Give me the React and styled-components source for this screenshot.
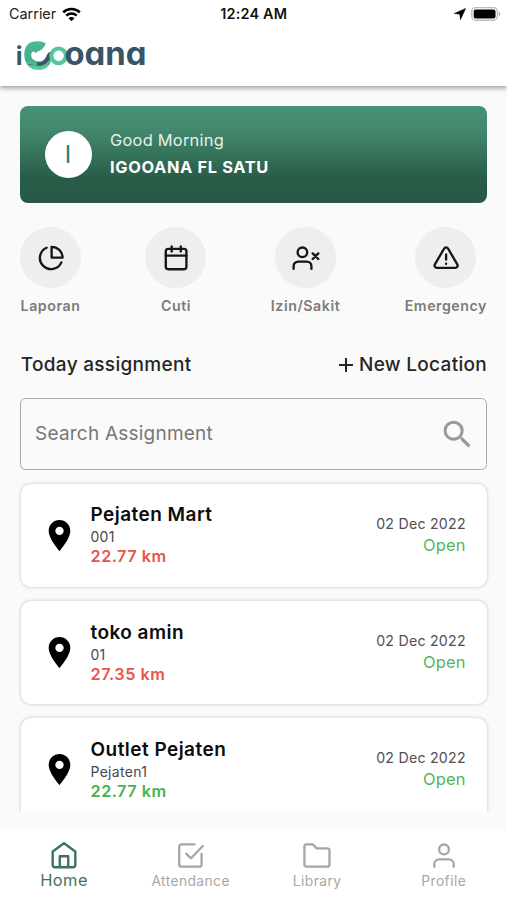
import React from "react";
import styled, { createGlobalStyle } from "styled-components";

const GlobalStyle = createGlobalStyle`
  * { box-sizing: border-box; }
  body { margin: 0; background: #fafafa; }
  svg { display: block; flex: none; }
`;

const Screen = styled.div`
  width: 507px;
  height: 900px;
  overflow: hidden;
  display: flex;
  flex-direction: column;
  background: #fafafa;
  font-family: Inter, "Liberation Sans", sans-serif;
`;

const Header = styled.header`
  height: 86px;
  flex: none;
  background: #fff;
  box-shadow: 0 2px 5px rgba(0, 0, 0, 0.38);
`;

const StatusBar = styled.div`
  height: 28px;
  padding: 0 6.5px 0 9px;
  display: grid;
  grid-template-columns: 1fr auto 1fr;
  align-items: center;
`;

const StatusGroup = styled.div`
  display: flex;
  align-items: center;
  gap: ${(p) => p.$gap}px;
  justify-content: ${(p) => (p.$end ? "flex-end" : "flex-start")};
`;

const Carrier = styled.span`
  font-size: 14.4px;
  line-height: 28px;
  color: #222;
`;

const Clock = styled.span`
  margin-right: 2px;
  font-size: 14.4px;
  line-height: 28px;
  font-weight: 600;
  letter-spacing: 0.2px;
  color: #111;
`;

const Brand = styled.div`
  padding: 6px 0 0 14px;
`;

const Main = styled.main`
  flex: none;
  height: 726px;
  padding: 20px 20px 0 20px;
  display: flex;
  flex-direction: column;
  overflow: hidden;
`;

const Greeting = styled.section`
  flex: none;
  height: 96.5px;
  padding-left: 24.5px;
  display: flex;
  align-items: center;
  gap: 18.5px;
  border-radius: 8px;
  background: linear-gradient(#459274 0%, #43886c 25%, #285c48 75%, #285845 100%);
`;

const Avatar = styled.div`
  width: 47px;
  height: 47px;
  border-radius: 50%;
  background: #fff;
  color: #23806a;
  font-size: 24px;
  line-height: 47px;
  text-align: center;
`;

const GreetingLine = styled.div`
  font-size: 16.4px;
  line-height: 27px;
  letter-spacing: ${(p) => (p.$strong ? 0.64 : 0.25)}px;
  font-weight: ${(p) => (p.$strong ? 700 : 400)};
  color: ${(p) => (p.$strong ? "#fff" : "#e6f1ec")};
`;

const Actions = styled.nav`
  flex: none;
  margin-top: 24.5px;
  display: flex;
  justify-content: space-between;
`;

const Action = styled.div`
  display: flex;
  flex-direction: column;
  align-items: center;
`;

const ActionCircle = styled.div`
  width: 61px;
  height: 61px;
  border-radius: 50%;
  background: #eee;
  display: flex;
  align-items: center;
  justify-content: center;
  color: #161616;
`;

const ActionLabel = styled.span`
  margin-top: 8px;
  font-size: 14.2px;
  line-height: 20px;
  font-weight: 600;
  letter-spacing: 0.55px;
  color: #7b7b7b;
`;

const SectionHead = styled.div`
  flex: none;
  height: 28px;
  margin-top: 35px;
  display: flex;
  align-items: center;
  justify-content: space-between;
  padding-left: 0.8px;
  color: #262626;
`;

const SectionText = styled.span`
  font-size: 19px;
  line-height: 28px;
  font-weight: 500;
  letter-spacing: 0.3px;
`;

const NewLocation = styled.div`
  display: flex;
  align-items: center;
  gap: 5px;
`;

const SearchBox = styled.div`
  flex: none;
  height: 72px;
  margin-top: 19px;
  padding: 0 10px 0 14px;
  display: flex;
  align-items: center;
  justify-content: space-between;
  border: 1.3px solid #aaa;
  border-radius: 5.5px;
  color: #999;
`;

const Placeholder = styled.span`
  font-size: 19px;
  line-height: 28px;
  letter-spacing: 0.22px;
  color: #777;
`;

const List = styled.div`
  flex: none;
  margin-top: 13.5px;
  display: flex;
  flex-direction: column;
  gap: 14.3px;
`;

const Card = styled.article`
  flex: none;
  height: 103px;
  margin-left: 0.6px;
  padding: 0 21.2px 0 20.4px;
  display: flex;
  align-items: center;
  border-radius: 10px;
  background: #fff;
  box-shadow: 0 0 3px 1px rgba(0, 0, 0, 0.13);
`;

const CardBody = styled.div`
  flex: 1;
  margin: -1.6px 0 0 12.5px;
`;

const CardTitle = styled.div`
  font-size: 19px;
  line-height: 26px;
  font-weight: 600;
  letter-spacing: 0.46px;
  color: #0c0c0c;
`;

const CardCode = styled.div`
  font-size: 14px;
  line-height: 18px;
  letter-spacing: 0.3px;
  color: #484848;
`;

const Distance = styled.div`
  font-size: 16.3px;
  line-height: 20px;
  font-weight: 600;
  letter-spacing: 0.5px;
  color: ${(p) => (p.$near ? "#4caf50" : "#ec5348")};
`;

const CardMeta = styled.div`
  margin-top: -1px;
  text-align: right;
`;

const CardDate = styled.div`
  font-size: 14.2px;
  line-height: 20px;
  letter-spacing: 0.23px;
  color: #505050;
`;

const CardStatus = styled.div`
  font-size: 16.4px;
  line-height: 22px;
  letter-spacing: 0.25px;
  color: #55b559;
`;

const TabBar = styled.nav`
  flex: none;
  height: 69px;
  margin-top: 19px;
  display: grid;
  grid-template-columns: repeat(4, 1fr);
  padding-left: 0.8px;
  background: #fff;
`;

const Tab = styled.div`
  padding-top: 9.5px;
  display: flex;
  flex-direction: column;
  align-items: center;
  color: ${(p) => (p.$active ? "#3d7460" : "#a6a6a6")};
`;

const TabLabel = styled.span`
  margin-top: ${(p) => (p.$active ? 0 : 1)}px;
  font-size: ${(p) => (p.$active ? 16.4 : 13.8)}px;
  line-height: 22px;
  letter-spacing: 0.42px;
`;

const LineIcon = ({ children, width = 2.35 }) => (
  <svg width="28" height="28" viewBox="0 0 28 28" fill="none" stroke="currentColor" strokeWidth={width} strokeLinecap="round" strokeLinejoin="round">
    {children}
  </svg>
);

const PieIcon = () => (
  <LineIcon>
    <path d="M14.6 2.8v10.8h11a11 11 0 0 0-11-10.8z" />
    <path d="M9.6 3.7A11.2 11.2 0 1 0 24.4 18.4" />
  </LineIcon>
);

const CalendarIcon = () => (
  <LineIcon>
    <rect x="3.8" y="4.8" width="20.6" height="20.4" rx="2.4" />
    <path d="M9.7 2.4v5M18.8 2.4v5M3.8 11.6h20.6" />
  </LineIcon>
);

const AbsentIcon = () => (
  <LineIcon>
    <circle cx="10.4" cy="8.3" r="4.8" />
    <path d="M1.6 24.8v-2.6a4.6 4.6 0 0 1 4.6-4.6h8.6a4.6 4.6 0 0 1 4.6 4.6v2.6M20.7 9.4l5.6 5.6M26.3 9.4l-5.6 5.6" />
  </LineIcon>
);

const AlertIcon = () => (
  <LineIcon>
    <path d="M12.2 4.5 2.9 20.3a2.3 2.3 0 0 0 2 3.5h18.4a2.3 2.3 0 0 0 2-3.5L16 4.5a2.2 2.2 0 0 0-3.8 0z" />
    <path d="M14.1 10.3v5.3M14.1 19.7v.1" />
  </LineIcon>
);

const HomeIcon = () => (
  <LineIcon width={2.4}>
    <path d="M2.7 10.4 14 2.3l11.3 8.1v13.4a2.4 2.4 0 0 1-2.4 2.4H5.1a2.4 2.4 0 0 1-2.4-2.4z" />
    <path d="M9.8 26V15.2h8.4V26" />
  </LineIcon>
);

const AttendanceIcon = () => (
  <LineIcon width={2.3}>
    <path d="M17.6 3.3H4.4a2.2 2.2 0 0 0-2.2 2.2v18a2.2 2.2 0 0 0 2.2 2.2h18a2.2 2.2 0 0 0 2.2-2.2V13" />
    <path d="m9.2 12.7 4.8 4.6L25.8 5" />
  </LineIcon>
);

const LibraryIcon = () => (
  <LineIcon width={2.3}>
    <path d="M1.4 5.4a2.1 2.1 0 0 1 2.1-2.1h6.3l3.7 4h10.8a2.2 2.2 0 0 1 2.2 2.2v14a2.2 2.2 0 0 1-2.2 2.2H3.5a2.1 2.1 0 0 1-2.1-2.2z" />
  </LineIcon>
);

const ProfileIcon = () => (
  <LineIcon width={2.3}>
    <circle cx="14" cy="8.4" r="4.9" />
    <path d="M4.3 25.8v-2.6a4.8 4.8 0 0 1 4.8-4.8h9.8a4.8 4.8 0 0 1 4.8 4.8v2.6" />
  </LineIcon>
);

const PinIcon = () => (
  <svg width="37" height="37" viewBox="0 0 24 24">
    <path fill="#000" fillRule="evenodd" d="M12 2C8.13 2 5 5.13 5 9c0 5.25 7 13 7 13s7-7.75 7-13c0-3.87-3.13-7-7-7zm0 4.3a2.7 2.7 0 1 1 0 5.4 2.7 2.7 0 0 1 0-5.4z" />
  </svg>
);

const SearchIcon = () => (
  <svg width="37" height="37" viewBox="0 0 24 24" fill="currentColor">
    <path d="M15.5 14h-.79l-.28-.27A6.47 6.47 0 0 0 16 9.5 6.5 6.5 0 1 0 9.5 16c1.61 0 3.09-.59 4.23-1.57l.27.28v.79l5 4.99L20.49 19l-4.99-5zm-6 0C7.01 14 5 11.99 5 9.5S7.01 5 9.5 5 14 7.01 14 9.5 11.99 14 9.5 14z" />
  </svg>
);

const PlusIcon = () => (
  <svg width="16" height="16" viewBox="0 0 16 16" stroke="currentColor" strokeWidth="2">
    <path d="M8 1v14M1 8h14" />
  </svg>
);

const WifiIcon = () => (
  <svg width="19" height="15" viewBox="0 0 19 15" fill="none" stroke="#000" strokeWidth="2.5">
    <path d="M1.2 5.4a11.8 11.8 0 0 1 16.6 0M4.3 8.7a7.4 7.4 0 0 1 10.4 0" />
    <path d="M9.5 14.2 6.5 11.2a4.2 4.2 0 0 1 6 0z" fill="#000" stroke="none" />
  </svg>
);

const LocationIcon = () => (
  <svg width="12" height="12" viewBox="0 0 12 12">
    <path d="M11.6.4.3 5.5 5.8 6.2 6.5 11.7z" fill="#000" stroke="#000" strokeWidth=".5" strokeLinejoin="round" />
  </svg>
);

const BatteryIcon = () => (
  <svg width="30" height="15" viewBox="0 0 30 15">
    <rect x=".8" y=".6" width="25.6" height="12.6" rx="4" fill="#fff" stroke="#bdbdbd" strokeWidth="1.4" />
    <rect x="2.7" y="2.4" width="21.8" height="9" rx="2" fill="#000" />
    <path d="M27.8 4.8v4.4q1.6-.6 1.6-2.2t-1.6-2.2z" fill="#aaa" />
  </svg>
);

const LogoText = styled.text`
  font-family: Inter, sans-serif;
  font-weight: 700;
  font-feature-settings: "cv11" 1;
  fill: #385567;
`;

const Logo = () => (
  <svg width="140" height="44" viewBox="14 34 140 44">
    <defs>
      <linearGradient id="swirl" x1="0" y1="0" x2="0" y2="1">
        <stop offset="0" stopColor="#4cb98e" />
        <stop offset="0.65" stopColor="#45ae8b" />
        <stop offset="1" stopColor="#59d3a0" />
      </linearGradient>
    </defs>
    <LogoText x="15.8" y="65" fontSize="25">i</LogoText>
    <path d="M45.8 43.4C42.5 41.3 36.5 40.6 31 42.3 26 44.4 23.9 50.2 24.4 56.5 24.9 64.8 31 70.1 38.6 70.1 45.3 70.1 50.3 65.6 50.9 60.5L49.3 52.4C46.5 57.8 43.9 61.3 38.6 61.3 33.7 61.3 31 57.8 31.2 54.4 31.5 51.3 33.5 50.2 35.5 53.2 37.5 50.2 42.4 51.7 45.8 43.4z" fill="url(#swirl)" />
    <path d="M27 64.2C33 63.2 38.4 68 44.3 64.6 48 62.5 51.1 58.2 50.8 52.5 48.8 51.2 47.3 53.6 46 57 43.8 62 40 63.4 36 62 40 66.3 33.5 65.3 27 64.2z" fill="#385567" />
    <circle cx="58.6" cy="55.8" r="7.3" fill="none" stroke="#55c59b" strokeWidth="4.2" />
    <LogoText x="64.4" y="64.8" fontSize="32" textLength="82" lengthAdjust="spacingAndGlyphs">oana</LogoText>
  </svg>
);

const actions = [
  { label: "Laporan", Icon: PieIcon },
  { label: "Cuti", Icon: CalendarIcon },
  { label: "Izin/Sakit", Icon: AbsentIcon },
  { label: "Emergency", Icon: AlertIcon },
];

const assignments = [
  { name: "Pejaten Mart", code: "001", distance: "22.77 km", date: "02 Dec 2022", status: "Open" },
  { name: "toko amin", code: "01", distance: "27.35 km", date: "02 Dec 2022", status: "Open" },
  { name: "Outlet Pejaten", code: "Pejaten1", distance: "22.77 km", near: true, date: "02 Dec 2022", status: "Open" },
];

const tabs = [
  { label: "Home", Icon: HomeIcon, active: true },
  { label: "Attendance", Icon: AttendanceIcon },
  { label: "Library", Icon: LibraryIcon },
  { label: "Profile", Icon: ProfileIcon },
];

export default function App() {
  return (
    <>
      <GlobalStyle />
      <Screen>
        <Header>
          <StatusBar>
            <StatusGroup $gap={6}>
              <Carrier>Carrier</Carrier>
              <WifiIcon />
            </StatusGroup>
            <Clock>12:24 AM</Clock>
            <StatusGroup $gap={4.5} $end>
              <LocationIcon />
              <BatteryIcon />
            </StatusGroup>
          </StatusBar>
          <Brand>
            <Logo />
          </Brand>
        </Header>
        <Main>
          <Greeting>
            <Avatar>I</Avatar>
            <div>
              <GreetingLine>Good Morning</GreetingLine>
              <GreetingLine $strong>IGOOANA FL SATU</GreetingLine>
            </div>
          </Greeting>
          <Actions>
            {actions.map(({ label, Icon }) => (
              <Action key={label}>
                <ActionCircle>
                  <Icon />
                </ActionCircle>
                <ActionLabel>{label}</ActionLabel>
              </Action>
            ))}
          </Actions>
          <SectionHead>
            <SectionText>Today assignment</SectionText>
            <NewLocation>
              <PlusIcon />
              <SectionText>New Location</SectionText>
            </NewLocation>
          </SectionHead>
          <SearchBox>
            <Placeholder>Search Assignment</Placeholder>
            <SearchIcon />
          </SearchBox>
          <List>
            {assignments.map((a) => (
              <Card key={a.name}>
                <PinIcon />
                <CardBody>
                  <CardTitle>{a.name}</CardTitle>
                  <CardCode>{a.code}</CardCode>
                  <Distance $near={a.near}>{a.distance}</Distance>
                </CardBody>
                <CardMeta>
                  <CardDate>{a.date}</CardDate>
                  <CardStatus>{a.status}</CardStatus>
                </CardMeta>
              </Card>
            ))}
          </List>
        </Main>
        <TabBar>
          {tabs.map(({ label, Icon, active }) => (
            <Tab key={label} $active={active}>
              <Icon />
              <TabLabel $active={active}>{label}</TabLabel>
            </Tab>
          ))}
        </TabBar>
      </Screen>
    </>
  );
}
